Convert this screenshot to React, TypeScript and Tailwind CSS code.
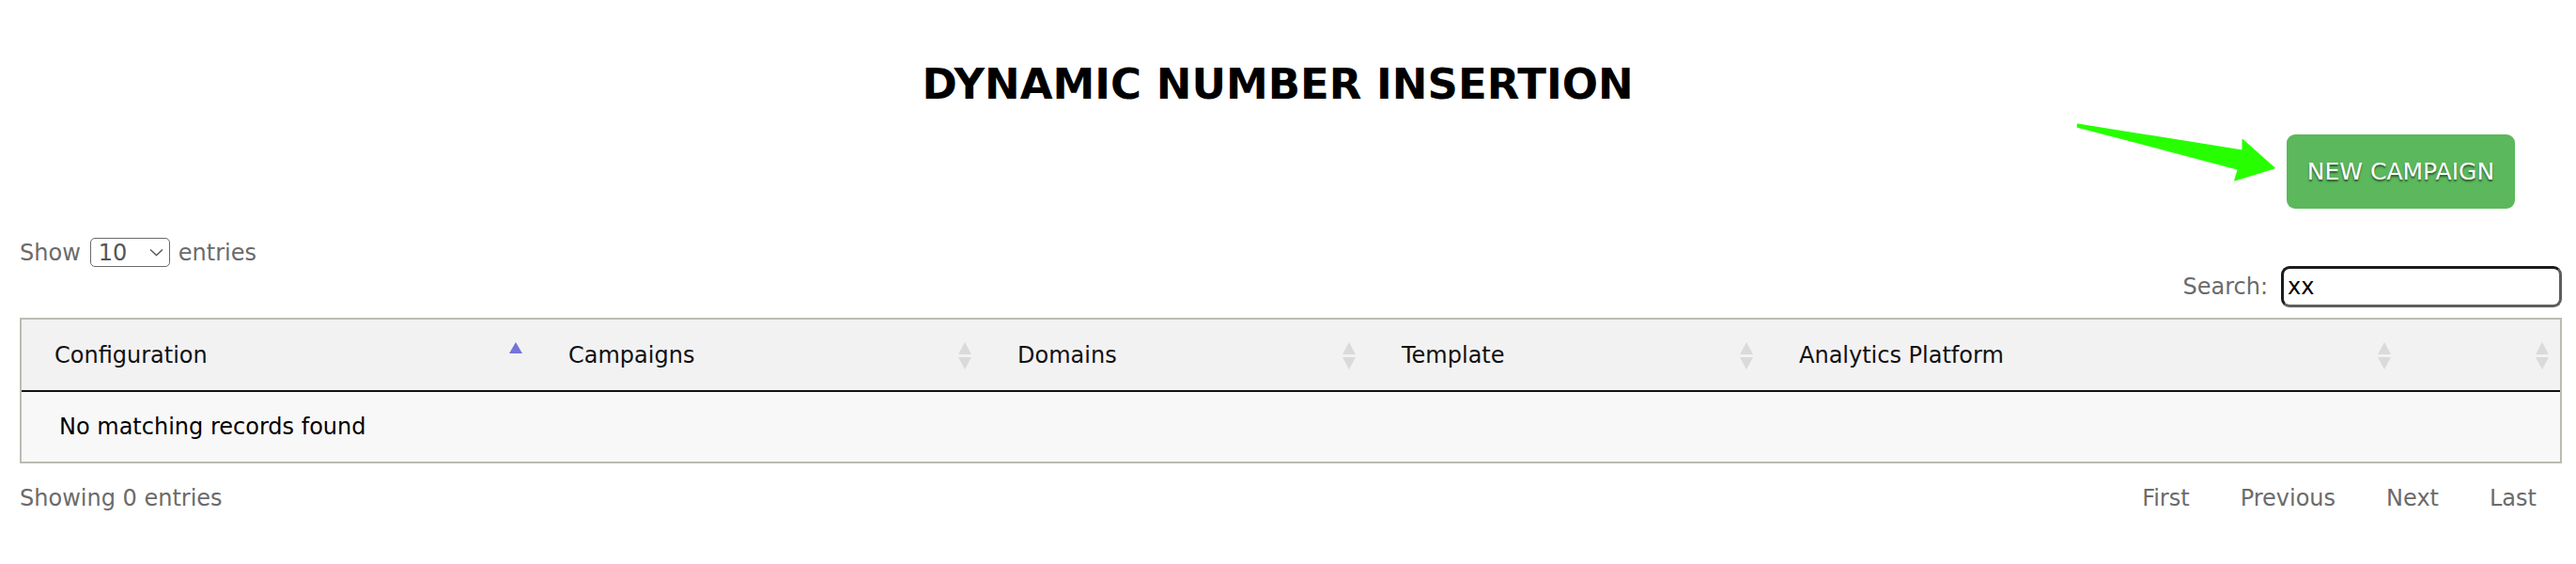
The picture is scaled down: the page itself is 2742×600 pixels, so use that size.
const columns = [
  { label: "Configuration", sort: "asc" },
  { label: "Campaigns", sort: "both" },
  { label: "Domains", sort: "both" },
  { label: "Template", sort: "both" },
  { label: "Analytics Platform", sort: "both" },
  { label: "", sort: "both" },
];

function SortIcon({ dir }: { dir: string }) {
  if (dir === "asc") {
    return (
      <svg width="16" height="30" viewBox="0 0 16 30" className="shrink-0">
        <polygon points="8,1 15,13 1,13" fill="#7474d9" />
      </svg>
    );
  }
  return (
    <svg width="16" height="30" viewBox="0 0 16 30" className="shrink-0">
      <polygon points="8,1 15,14 1,14" fill="#dadada" />
      <polygon points="1,17 15,17 8,30" fill="#dadada" />
    </svg>
  );
}

export default function App() {
  return (
    <div className="relative min-h-[600px] w-full bg-white font-['DejaVu_Sans',sans-serif] text-[24px]">
      {/* annotation arrow */}
      <svg
        className="absolute left-[2200px] top-[120px] pointer-events-none"
        width="230"
        height="80"
        viewBox="0 0 230 80"
      >
        <polygon
          points="11.5,12.2 187.2,40.2 187.2,28.7 220.9,58.8 178.9,71.7 182.5,59.9 11.5,15"
          fill="#27ff00"
          stroke="#27ff00"
          strokeWidth="1.5"
          strokeLinejoin="round"
        />
      </svg>

      <h1 className="pt-[68px] pr-[22px] text-center text-[45px] font-bold leading-[44px] text-black">
        DYNAMIC NUMBER INSERTION
      </h1>

      <div className="mt-[31px] flex justify-end pr-[65px]">
        <button className="h-[79px] w-[243px] rounded-[9px] bg-[#5cb85c] text-[25px] text-white [text-shadow:0_2px_2px_rgba(0,0,0,0.55)]">
          NEW CAMPAIGN
        </button>
      </div>

      <div className="ml-[21px] mr-[15px]">
        {/* length + search */}
        <div className="mt-[31px] flex h-[74px] justify-between">
          <div className="flex h-[31px] items-center gap-[10px] text-[#6b6b6b]">
            <span>Show</span>
            <div className="flex h-[31px] w-[85px] items-center justify-between rounded-[5px] border-[1.5px] border-[#6a6a6a] pl-[8px] pr-[6px] text-[#555]">
              <span>10</span>
              <svg width="15" height="9" viewBox="0 0 15 9">
                <path d="M1 1.5 L7.5 7.5 L14 1.5" fill="none" stroke="#555" strokeWidth="1.3" />
              </svg>
            </div>
            <span className="-ml-[1px]">entries</span>
          </div>

          <div className="flex items-center gap-[14px] self-end text-[#6b6b6b]">
            <span>Search:</span>
            <div className="flex h-[44px] w-[299px] items-center rounded-[9px] border-[3px] border-[#1c1c1c] border-b-[#5e5e5e] border-r-[#5e5e5e] pl-[4px] text-black">
              xx
            </div>
          </div>
        </div>

        {/* table */}
        <div className="mt-[11px] border-2 border-[#bcbbb3]">
          <div className="grid h-[77px] grid-cols-[545px_478px_409px_423px_679px_168px] border-b-2 border-[#111] bg-[#f3f2f3] text-[#111]">
            {columns.map((c, i) => (
              <div
                key={i}
                className={`flex items-center justify-between pr-[11px] ${i === 0 ? "pl-[35px]" : "pl-[37px]"}`}
              >
                <span>{c.label}</span>
                <SortIcon dir={c.sort} />
              </div>
            ))}
          </div>
          <div className="flex h-[74px] items-center bg-[#f8f8f8] pl-[40px] text-black">
            No matching records found
          </div>
        </div>

        {/* footer */}
        <div className="mt-[25px] flex justify-between leading-[24px] text-[#6b6b6b]">
          <span>Showing 0 entries</span>
          <div className="flex">
            <span className="px-[27px]">First</span>
            <span className="px-[27px]">Previous</span>
            <span className="px-[27px]">Next</span>
            <span className="px-[27px]">Last</span>
          </div>
        </div>
      </div>
    </div>
  );
}
